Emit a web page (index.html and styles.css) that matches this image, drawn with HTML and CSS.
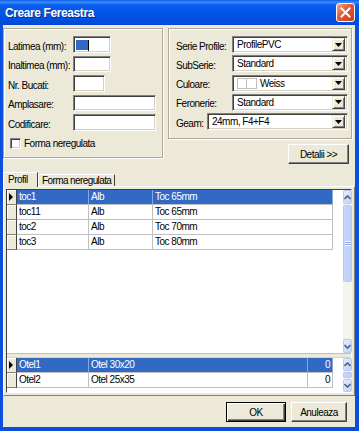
FILE: index.html
```html
<!DOCTYPE html>
<html lang="ro">
<head>
  <meta charset="UTF-8">
  <meta name="viewport" content="width=device-width, initial-scale=1.0">
  <title>Creare Fereastra</title>
  <link rel="stylesheet" href="styles.css">
</head>
<body>
  <div class="window">
    <!-- Title bar -->
    <div class="titlebar">
      <span class="title">Creare Fereastra</span>
      <span class="close">
        <svg width="11" height="11" viewBox="0 0 11 11"><path d="M1.5 1.5 L9.5 9.5 M9.5 1.5 L1.5 9.5" stroke="#fff" stroke-width="2" stroke-linecap="square"/></svg>
      </span>
    </div>

    <div class="client">
      <div class="top">
        <!-- Dimensions -->
        <div class="group group-left">
          <div class="field"><span class="label">Latimea (mm):</span><span class="edit w38"><span class="sel"></span><span class="caret"></span></span></div>
          <div class="field"><span class="label">Inaltimea (mm):</span><span class="edit w38"></span></div>
          <div class="field"><span class="label">Nr. Bucati:</span><span class="edit w32"></span></div>
          <div class="field"><span class="label">Amplasare:</span><span class="edit w83"></span></div>
          <div class="field"><span class="label">Codificare:</span><span class="edit w83"></span></div>
          <div class="check"><span class="box"></span><span>Forma neregulata</span></div>
        </div>

        <!-- Profile options -->
        <div class="right-col">
          <div class="group group-right">
            <div class="field"><span class="label label-r">Serie Profile:</span>
              <span class="combo w116"><span class="val">ProfilePVC</span><span class="drop"><svg width="7" height="4" viewBox="0 0 7 4"><path d="M0 0 H7 L3.5 4 Z" fill="#000"/></svg></span></span></div>
            <div class="field"><span class="label label-r">SubSerie:</span>
              <span class="combo w116"><span class="val">Standard</span><span class="drop"><svg width="7" height="4" viewBox="0 0 7 4"><path d="M0 0 H7 L3.5 4 Z" fill="#000"/></svg></span></span></div>
            <div class="field"><span class="label label-r">Culoare:</span>
              <span class="combo w116"><span class="val"><span class="swatch"></span><span class="swatch"></span>Weiss</span><span class="drop"><svg width="7" height="4" viewBox="0 0 7 4"><path d="M0 0 H7 L3.5 4 Z" fill="#000"/></svg></span></span></div>
            <div class="field"><span class="label label-r">Feronerie:</span>
              <span class="combo w116"><span class="val">Standard</span><span class="drop"><svg width="7" height="4" viewBox="0 0 7 4"><path d="M0 0 H7 L3.5 4 Z" fill="#000"/></svg></span></span></div>
            <div class="field"><span class="label label-geam">Geam:</span>
              <span class="combo w141"><span class="val">24mm, F4+F4</span><span class="drop"><svg width="7" height="4" viewBox="0 0 7 4"><path d="M0 0 H7 L3.5 4 Z" fill="#000"/></svg></span></span></div>
          </div>
          <button class="btn btn-details">Detalii &gt;&gt;</button>
        </div>
      </div>

      <!-- Tabs -->
      <div class="tab-strip">
        <span class="tab active">Profil</span>
        <span class="tab">Forma neregulata</span>
      </div>
      <div class="tab-panel">
        <div class="grids">
          <div class="grid grid-main">
            <div class="rows">
              <div class="row selected"><span class="ind"><span class="arrow"></span></span><span class="cell">toc1</span><span class="cell">Alb</span><span class="cell">Toc 65mm</span></div>
              <div class="row"><span class="ind"></span><span class="cell">toc11</span><span class="cell">Alb</span><span class="cell">Toc 65mm</span></div>
              <div class="row"><span class="ind"></span><span class="cell">toc2</span><span class="cell">Alb</span><span class="cell">Toc 70mm</span></div>
              <div class="row"><span class="ind"></span><span class="cell">toc3</span><span class="cell">Alb</span><span class="cell">Toc 80mm</span></div>
            </div>
            <div class="sb">
              <span class="sb-btn"><svg width="7" height="5" viewBox="0 0 7 5"><path d="M0.5 4 L3.5 1 L6.5 4" fill="none" stroke="#4d6185" stroke-width="1.6"/></svg></span>
              <span class="sb-thumb thumb-main"><span class="grip"></span></span>
              <span class="sb-track"></span>
              <span class="sb-btn"><svg width="7" height="5" viewBox="0 0 7 5"><path d="M0.5 1 L3.5 4 L6.5 1" fill="none" stroke="#4d6185" stroke-width="1.6"/></svg></span>
            </div>
          </div>
          <div class="splitter"></div>
          <div class="grid grid-steel">
            <div class="rows">
              <div class="row selected"><span class="ind"><span class="arrow"></span></span><span class="cell">Otel1</span><span class="cell">Otel 30x20</span><span class="cell num">0</span></div>
              <div class="row"><span class="ind"></span><span class="cell">Otel2</span><span class="cell">Otel 25x35</span><span class="cell num">0</span></div>
            </div>
            <div class="sb">
              <span class="sb-btn"><svg width="7" height="5" viewBox="0 0 7 5"><path d="M0.5 4 L3.5 1 L6.5 4" fill="none" stroke="#4d6185" stroke-width="1.6"/></svg></span>
              <span class="sb-thumb thumb-small"></span>
              <span class="sb-track"></span>
              <span class="sb-btn"><svg width="7" height="5" viewBox="0 0 7 5"><path d="M0.5 1 L3.5 4 L6.5 1" fill="none" stroke="#4d6185" stroke-width="1.6"/></svg></span>
            </div>
          </div>
        </div>
      </div>

      <!-- Dialog buttons -->
      <div class="footer">
        <button class="btn btn-ok">OK</button>
        <button class="btn btn-cancel">Anuleaza</button>
      </div>
    </div>
  </div>
</body>
</html>
```

FILE: styles.css
```css
* {
  box-sizing: border-box;
}

body {
  margin: 0;
  font-family: "Liberation Sans", Arial, sans-serif;
  font-size: 10px;
  letter-spacing: -0.5px;
  color: #000;
  background: #fff;
}

.window {
  width: 359px;
  height: 431px;
  display: flex;
  flex-direction: column;
  background: #0b4fdc;
}

/* Title bar */
.titlebar {
  flex: none;
  height: 25px;
  display: flex;
  align-items: center;
  justify-content: space-between;
  padding: 0 4px 0 5px;
  background: linear-gradient(#0a5ae8, #3b8cfb 2px, #0a5ff0 5px, #0055e5 55%, #0049d8 100%);
  color: #fff;
}

.title {
  font-weight: bold;
  font-size: 12px;
  letter-spacing: -0.4px;
  text-shadow: 1px 1px 0 #0a2a8c;
}

.close {
  width: 19px;
  height: 19px;
  border: 1px solid #fff;
  border-radius: 3px;
  background: linear-gradient(135deg, #f3a98f, #e2582f 45%, #c63f1b);
  display: flex;
  align-items: center;
  justify-content: center;
}

.client {
  flex: 1;
  margin: 0 4px 4px 3px;
  background: #ece9d8;
  display: flex;
  flex-direction: column;
}

/* Top section */
.top {
  flex: none;
  height: 136px;
  margin-top: 3px;
  display: flex;
  align-items: flex-start;
}

.group {
  border: 1px solid #aca899;
  box-shadow: inset 1px 1px 0 #fff, 1px 1px 0 #fff;
}

.group-left {
  width: 160px;
  height: 130px;
  padding: 7px 0 0 4px;
}

.right-col {
  width: 184px;
  margin-left: 5px;
  display: flex;
  flex-direction: column;
}

.group-right {
  height: 111px;
  padding: 7px 3px 0 7px;
}

.field {
  display: flex;
  align-items: center;
  height: 17px;
  margin-bottom: 2.5px;
}

.group-right .field {
  margin-bottom: 2.25px;
}

.label {
  width: 65px;
  flex: none;
  padding-top: 3px;
  white-space: nowrap;
}

.label-r {
  width: 56px;
}

.label-geam {
  width: 31px;
}

.edit,
.combo {
  height: 17px;
  background: #fff;
  border: 1px solid;
  border-color: #808080 #fff #fff #808080;
  box-shadow: inset 1px 1px 0 #404040, inset -1px -1px 0 #d4d0c8;
}

.edit {
  display: flex;
  align-items: flex-start;
  padding: 2px 0 0 2px;
}

.field:nth-child(odd) .edit {
  height: 17px;
}

.field:nth-child(even) .edit {
  height: 16px;
}

.w32 { width: 32px; }
.w38 { width: 38px; }
.w83 { width: 83px; }
.w116 { width: 116px; }
.w141 { width: 141px; }

.sel {
  width: 12px;
  height: 10px;
  margin-top: 1px;
  background: #316ac5;
}

.caret {
  width: 1px;
  height: 11px;
  margin-top: 1px;
  background: #000;
}

.check {
  display: flex;
  align-items: center;
  margin-top: 7px;
  padding-left: 2px;
  gap: 3px;
}

.box {
  width: 11px;
  height: 11px;
  background: #fff;
  border: 1px solid;
  border-color: #808080 #fff #fff #808080;
  box-shadow: inset 1px 1px 0 #404040, inset -1px -1px 0 #d4d0c8;
}

.combo {
  display: flex;
  align-items: center;
  padding: 2px;
}

.val {
  flex: 1;
  display: flex;
  align-items: center;
  padding-left: 2px;
  white-space: nowrap;
}

.swatch {
  width: 10px;
  height: 11px;
  border: 1px solid #c0c0c0;
  background: #fff;
}

.swatch + .swatch {
  border-left: none;
  margin-right: 3px;
}

.drop {
  width: 13px;
  height: 13px;
  display: flex;
  align-items: center;
  justify-content: center;
  background: #ece9d8;
  border: 1px solid;
  border-color: #ece9d8 #404040 #404040 #ece9d8;
  box-shadow: inset 1px 1px 0 #fff, inset -1px -1px 0 #808080;
}

/* Buttons */
.btn {
  font: inherit;
  letter-spacing: inherit;
  color: #000;
  height: 20px;
  padding: 0;
  background: #ece9d8;
  border: 1px solid;
  border-color: #fff #404040 #404040 #fff;
  box-shadow: inset -1px -1px 0 #808080;
}

.btn-details {
  align-self: flex-end;
  width: 61px;
  margin: 5px 3px 0 0;
}

/* Tabs */
.tab-strip {
  flex: none;
  height: 14px;
  margin-top: 8px;
  display: flex;
  align-items: flex-end;
  position: relative;
  z-index: 1;
}

.tab {
  height: 12px;
  padding: 0 0 0 3px;
  border: 1px solid;
  border-bottom: none;
  border-color: #fff #404040 #404040 #fff;
  background: #ece9d8;
  line-height: 10px;
  white-space: nowrap;
}

.tab.active {
  width: 35px;
  height: 15px;
  margin-bottom: -1px;
  padding: 2px 0 0 4px;
}

.tab:not(.active) {
  min-width: 76px;
  padding: 1px 3px 0 3px;
  letter-spacing: -0.6px;
}

.tab-panel {
  flex: 1;
  display: flex;
  flex-direction: column;
  padding: 2px;
  border: 1px solid;
  border-color: #fff #808080 #808080 #fff;
}

.grids {
  flex: 1;
  display: flex;
  flex-direction: column;
  border: 1px solid;
  border-color: #404040 #fff #fff #404040;
  background: #fff;
}

.grid {
  display: flex;
  background: #fff;
}

.grid-main {
  height: 163px;
}

.grid-steel {
  flex: 1;
}

.splitter {
  height: 5px;
  background: #ece9d8;
  border-top: 1px solid #c0c0c0;
  border-bottom: 1px solid #d8d5c6;
}

.rows {
  width: 326px;
}

.row {
  display: grid;
  height: 15px;
  line-height: 14px;
}

.grid-main .row {
  grid-template-columns: 10px 72px 64px 180px;
}

.grid-steel .row {
  grid-template-columns: 10px 72px 219px 25px;
}

.cell {
  padding-left: 2px;
  border-right: 1px solid #c0c0c0;
  border-bottom: 1px solid #c0c0c0;
  white-space: nowrap;
  overflow: hidden;
}

.cell:first-of-type {
  padding-left: 1px;
}

.cell.num {
  text-align: right;
  padding-right: 2px;
}

.row.selected .cell {
  background: #316ac5;
  color: #fff;
  border-right-color: #8aa6da;
  border-bottom-color: #c0c0c0;
}

.ind {
  background: #ece9d8;
  border-right: 1px solid #404040;
  border-bottom: 1px solid #808080;
  box-shadow: inset 1px 1px 0 #fff;
  display: flex;
  align-items: center;
  padding-left: 2px;
}

.arrow {
  width: 0;
  height: 0;
  border-top: 4px solid transparent;
  border-bottom: 4px solid transparent;
  border-left: 4px solid #000;
}

/* Scroll bars */
.sb {
  width: 14px;
  margin-left: 10px;
  display: flex;
  flex-direction: column;
  background: #f4f3ee;
}

.sb-btn {
  height: 14px;
  flex: none;
  display: flex;
  align-items: center;
  justify-content: center;
  border: 1px solid #b9cbf5;
  border-radius: 2px;
  background: linear-gradient(135deg, #e4ecfd, #c1d3fb);
}

.grid-steel .sb-btn {
  height: 13px;
}

.sb-thumb {
  flex: none;
  margin-top: 1px;
  border: 1px solid #b5c8f4;
  border-radius: 2px;
  background: linear-gradient(90deg, #c8d7fb, #bccff9);
  display: flex;
  align-items: center;
  justify-content: center;
}

.thumb-main {
  height: 77px;
}

.thumb-small {
  height: 6px;
}

.grip {
  width: 6px;
  height: 5px;
  background: repeating-linear-gradient(#eef3fe 0 1px, #8eaef0 1px 2px);
}

.sb-track {
  flex: 1;
}

/* Footer */
.footer {
  flex: none;
  height: 31px;
  display: flex;
  justify-content: flex-end;
  align-items: flex-start;
  gap: 5px;
  padding: 6px 8px 0 0;
}

.btn-ok {
  width: 60px;
  border-color: #000;
  box-shadow: inset 1px 1px 0 #fff, inset -1px -1px 0 #404040, inset -2px -2px 0 #808080;
}

.btn-cancel {
  width: 56px;
}
```
